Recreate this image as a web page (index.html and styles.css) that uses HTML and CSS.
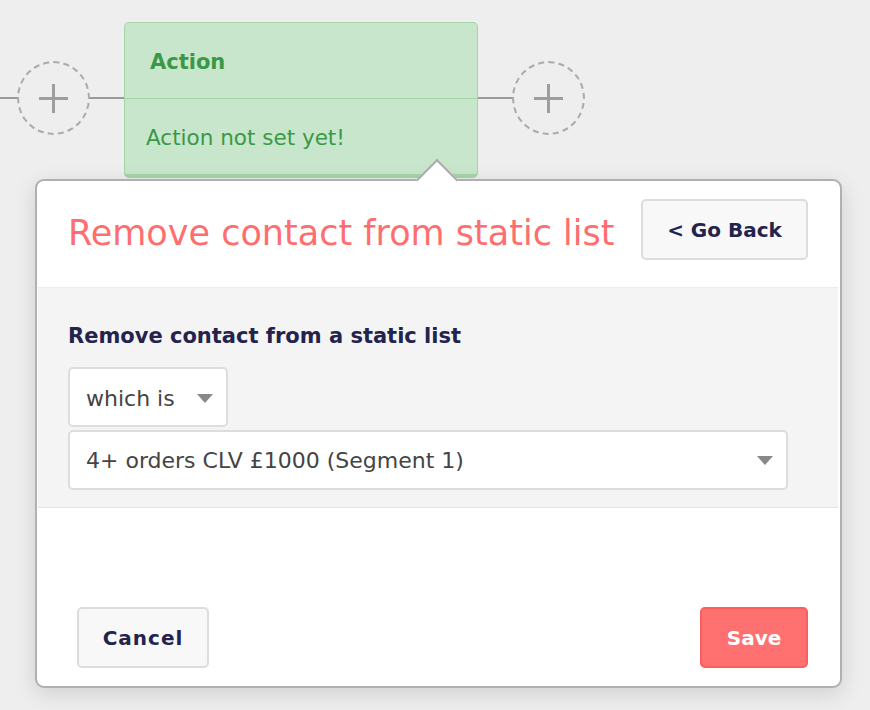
FILE: index.html
```html
<!DOCTYPE html>
<html lang="en">
<head>
<meta charset="utf-8">
<title>Workflow action</title>
<link rel="stylesheet" href="styles.css">
</head>
<body>
<div class="canvas">
  <div class="line line-a"></div>
  <div class="line line-b"></div>
  <div class="line line-c"></div>

  <div class="add-node add-left"><span class="plus"></span></div>
  <div class="add-node add-right"><span class="plus"></span></div>

  <div class="action-card">
    <div class="action-head">Action</div>
    <div class="action-body">Action not set yet!</div>
  </div>

  <div class="modal">
    <div class="modal-arrow"></div>
    <div class="modal-header">
      <h1 class="modal-title">Remove contact from static list</h1>
      <button class="btn btn-back">&lt; Go Back</button>
    </div>
    <div class="modal-section">
      <div class="field-label">Remove contact from a static list</div>
      <div class="select select-small">
        <span class="select-text">which is</span>
        <span class="caret"></span>
      </div>
      <div class="select select-wide">
        <span class="select-text">4+ orders CLV £1000 (Segment 1)</span>
        <span class="caret"></span>
      </div>
    </div>
    <div class="modal-footer">
      <button class="btn btn-cancel">Cancel</button>
      <button class="btn btn-save">Save</button>
    </div>
  </div>
</div>
</body>
</html>
```
FILE: styles.css
```css
* { box-sizing: border-box; }

html, body {
  margin: 0;
  padding: 0;
  background: #eeeeee;
  font-family: "DejaVu Sans", "Liberation Sans", sans-serif;
}

.canvas {
  position: relative;
  width: 870px;
  height: 710px;
  overflow: hidden;
}

/* connector lines */
.line {
  position: absolute;
  top: 97px;
  height: 2px;
  background: #9a9a9a;
}
.line-a { left: 0; width: 19px; }
.line-b { left: 89px; width: 37px; }
.line-c { left: 477px; width: 37px; }

/* dashed add nodes */
.add-node {
  position: absolute;
  top: 61px;
  width: 73px;
  height: 74px;
  border: 2px dashed #aaaaaa;
  border-radius: 50%;
  display: flex;
  align-items: center;
  justify-content: center;
}
.add-left { left: 17px; }
.add-right { left: 512px; }

.plus {
  position: relative;
  width: 29px;
  height: 29px;
}
.plus::before,
.plus::after {
  content: "";
  position: absolute;
  background: #9d9d9d;
}
.plus::before { left: 0; right: 0; top: 13px; height: 3px; }
.plus::after { top: 0; bottom: 0; left: 13px; width: 3px; }

/* action card */
.action-card {
  position: absolute;
  left: 124px;
  top: 22px;
  width: 354px;
  height: 156px;
  background: #c8e6cb;
  border: 1.5px solid #a4d5a8;
  border-bottom-width: 4px;
  border-radius: 5px;
  color: #3a9947;
  display: flex;
  flex-direction: column;
}
.action-head {
  height: 76px;
  padding: 3px 0 0 25px;
  display: flex;
  align-items: center;
  font-weight: bold;
  font-size: 21px;
  border-bottom: 1.5px solid #a4d5a8;
}
.action-body {
  flex: 1;
  padding: 1px 0 0 21px;
  display: flex;
  align-items: center;
  font-size: 21.5px;
}

/* modal */
.modal {
  position: absolute;
  left: 35px;
  top: 179px;
  width: 807px;
  background: #ffffff;
  border: 2px solid #b0b0b0;
  border-radius: 9px;
  box-shadow: 0 6px 22px rgba(0, 0, 0, 0.13);
  display: flex;
  flex-direction: column;
}

.modal-arrow {
  position: absolute;
  left: 385px;
  top: -16px;
  width: 30px;
  height: 30px;
  background: #ffffff;
  border-top: 2px solid #a9a9a9;
  border-left: 2px solid #a9a9a9;
  transform: rotate(45deg);
}

.modal-header {
  position: relative;
  display: flex;
  justify-content: space-between;
  align-items: flex-start;
  padding: 18px 32px 27px 31px;
}
.modal-title {
  margin: 13px 0 0 0;
  font-size: 35px;
  font-weight: normal;
  line-height: 42px;
  color: #ff6e6e;
  white-space: nowrap;
}

.btn {
  font-family: "DejaVu Sans", "Liberation Sans", sans-serif;
  font-weight: bold;
  font-size: 20px;
  border-radius: 5px;
  cursor: pointer;
  display: flex;
  align-items: center;
  justify-content: center;
  padding: 0;
}
.btn-back {
  width: 167px;
  height: 61px;
  background: #f8f8f8;
  border: 2px solid #dcdcdc;
  color: #23234d;
}

.modal-section {
  margin: 0 2px 0 1px;
  background: #f4f4f4;
  border-top: 1px solid #ececec;
  border-bottom: 1px solid #e5e5e5;
  padding: 36px 48px 17px 30px;
  display: flex;
  flex-direction: column;
  align-items: flex-start;
}
.field-label {
  font-size: 21px;
  font-weight: bold;
  line-height: 25px;
  color: #23234d;
  margin-bottom: 18px;
}

.select {
  position: relative;
  height: 60px;
  background: #ffffff;
  border: 2px solid #dddddd;
  border-radius: 5px;
  display: flex;
  align-items: center;
  justify-content: space-between;
  color: #444444;
  font-size: 22px;
}
.select-small {
  width: 160px;
  padding: 2px 13px 0 16px;
  margin-bottom: 3px;
}
.select-wide {
  width: 720px;
  padding: 0 13px 0 16px;
}
.select-text { white-space: nowrap; }

.caret {
  width: 0;
  height: 0;
  border-left: 8px solid transparent;
  border-right: 8px solid transparent;
  border-top: 9px solid #888888;
}

.modal-footer {
  display: flex;
  justify-content: space-between;
  align-items: flex-end;
  padding: 99px 32px 18px 40px;
}
.btn-cancel {
  width: 132px;
  height: 61px;
  background: #f8f8f8;
  border: 2px solid #dcdcdc;
  color: #23234d;
  letter-spacing: 1px;
}
.btn-save {
  width: 108px;
  height: 61px;
  background: #ff7070;
  border: 2px solid #ff5c5c;
  color: #ffffff;
}
```
